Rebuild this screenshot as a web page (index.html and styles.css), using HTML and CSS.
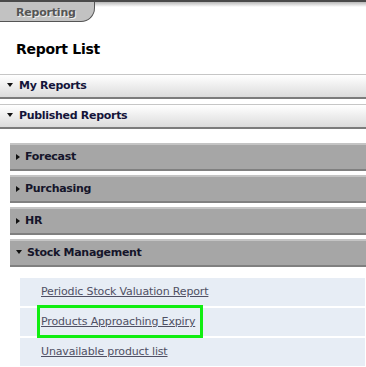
FILE: index.html
```html
<!DOCTYPE html>
<html lang="en">
<head>
  <meta charset="UTF-8">
  <title>Report List</title>
  <link rel="stylesheet" href="styles.css">
</head>
<body>
  <div class="tabbar">
    <div class="tab">Reporting</div>
  </div>

  <h1 class="title">Report List</h1>

  <div class="section">
    <div class="section-head">My Reports</div>
  </div>

  <div class="section">
    <div class="section-head">Published Reports</div>
    <div class="groups">
      <div class="group">
        <div class="group-head">Forecast</div>
      </div>
      <div class="group">
        <div class="group-head">Purchasing</div>
      </div>
      <div class="group">
        <div class="group-head">HR</div>
      </div>
      <div class="group open">
        <div class="group-head">Stock Management</div>
        <ul class="reports">
          <li><a href="#">Periodic Stock Valuation Report</a></li>
          <li class="highlighted"><a href="#">Products Approaching Expiry</a><span class="highlight-box"></span></li>
          <li><a href="#">Unavailable product list</a></li>
        </ul>
      </div>
    </div>
  </div>
</body>
</html>
```

FILE: styles.css
```css
body {
  margin: 0;
  font-family: "DejaVu Sans", Verdana, sans-serif;
  background: #fff;
  color: #222;
}
.tabbar {
  height: 20px;
  border-top: 2px solid #4a4a4a;
  background: linear-gradient(#b8b8b8, #fff 5px);
}
.tab {
  width: 95px;
  height: 20px;
  box-sizing: border-box;
  padding-left: 16px;
  background: #c2c2c2;
  border-right: 1px solid #555;
  border-bottom: 1px solid #555;
  border-bottom-right-radius: 14px;
  font-size: 11px;
  font-weight: bold;
  line-height: 21px;
  color: #555;
  letter-spacing: -0.2px;
  text-shadow: 1px 1px 0 #eee;
}
.title {
  margin: 17px 0 15px 16px;
  font-size: 14px;
  line-height: 20px;
  letter-spacing: -0.3px;
  color: #000;
}
.section {
  margin-bottom: 5px;
}
.section-head {
  height: 22px;
  padding-left: 7px;
  border-top: 1px solid #c6c6c6;
  border-bottom: 2px solid #7c7c7c;
  background: linear-gradient(#fff, #dcdcdc);
  font-size: 11px;
  font-weight: bold;
  line-height: 22px;
  letter-spacing: -0.3px;
  color: #14143a;
}
.section-head::before {
  content: "";
  display: inline-block;
  margin-right: 6px;
  vertical-align: 2px;
  border-left: 3.5px solid transparent;
  border-right: 3.5px solid transparent;
  border-top: 4px solid #111;
}
.groups {
  margin: 14px 0 0 10px;
}
.group {
  margin-bottom: 4px;
}
.group-head {
  height: 24px;
  padding-left: 6px;
  border-top: 2px solid #c4c4c4;
  border-bottom: 2px solid #808080;
  background: #a6a6a6;
  font-size: 11px;
  font-weight: bold;
  line-height: 24px;
  letter-spacing: -0.3px;
  color: #15152a;
}
.group-head::before {
  content: "";
  display: inline-block;
  margin-right: 5px;
  vertical-align: 0;
  border-top: 3.5px solid transparent;
  border-bottom: 3.5px solid transparent;
  border-left: 4px solid #111;
}
.group.open .group-head::before {
  vertical-align: 2px;
  border-top: 4px solid #111;
  border-left: 3.5px solid transparent;
  border-right: 3.5px solid transparent;
  border-bottom: 0;
}
.reports {
  list-style: none;
  margin: 11px 1px 0 10px;
  padding: 0;
}
.reports li {
  position: relative;
  height: 28px;
  margin-bottom: 2px;
  padding-left: 21px;
  background: #e7edf5;
  line-height: 28px;
  font-size: 11px;
  letter-spacing: -0.15px;
}
.reports a {
  color: #505064;
}
.highlight-box {
  position: absolute;
  left: 17px;
  top: -3px;
  width: 166px;
  height: 33px;
  box-sizing: border-box;
  border: 3px solid #11ee11;
}
```
